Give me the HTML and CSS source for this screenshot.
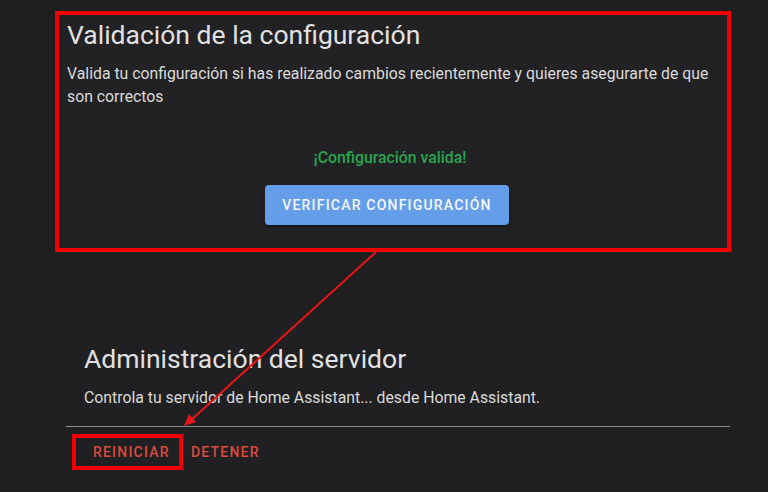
FILE: index.html
```html
<!doctype html>
<html lang="es">
<head>
    <meta charset="UTF-8">
    <meta name="viewport" content="width=device-width, initial-scale=1.0">
    <title>Controles del servidor</title>
    <link rel="stylesheet" href="styles.css">
</head>
<body>
<div class="page">
    <!-- Validation card (highlighted) -->
    <div class="highlight">
        <div class="card-content">
            <h1 class="card-title">Validación de la configuración</h1>
            <p class="card-text">Valida tu configuración si has realizado cambios recientemente y quieres asegurarte de que son correctos</p>
            <div class="result">¡Configuración valida!</div>
            <div class="validate-row">
                <button class="btn-primary">Verificar configuración</button>
            </div>
        </div>
    </div>

    <!-- Server management card -->
    <div class="card">
        <div class="card-body">
            <h1 class="card-title">Administración del servidor</h1>
            <p class="card-text">Controla tu servidor de Home Assistant... desde Home Assistant.</p>
        </div>
        <div class="card-actions">
            <button class="btn-text btn-marked">Reiniciar</button>
            <button class="btn-text">Detener</button>
        </div>
    </div>

    <!-- Annotation arrow -->
    <svg class="arrow" width="768" height="492" viewBox="0 0 768 492">
        <line x1="376" y1="252" x2="190" y2="421" stroke="#e8141a" stroke-width="2"/>
        <polygon points="184,426 189,414 196,422" fill="#e8141a"/>
    </svg>
</div>
</body>
</html>
```

FILE: styles.css
```css
/* Global Styles */
body {
    margin: 0;
    background: #1f1f20;
    font-family: Roboto, 'Noto Sans', sans-serif;
    color: #e1e1e1;
    overflow: hidden;
}

.page {
    position: relative;
    width: 768px;
    height: 492px;
    padding-top: 11px;
    box-sizing: border-box;
}

.card-title {
    margin: 0;
    font-size: 26.5px;
    font-weight: 400;
    line-height: 32px;
    color: #e1e1e1;
}

.card-text {
    margin: 0;
    font-size: 15.8px;
    line-height: 23px;
    color: #dadada;
}

/* Validation card */
.highlight {
    margin-left: 55px;
    width: 676px;
    box-sizing: border-box;
    border: 4px solid #f00000;
    background: #222224;
}

.card-content {
    padding: 4px 14px 23px 8px;
}

.card-content .card-text {
    margin-top: 11px;
}

.result {
    margin-top: 40px;
    text-align: center;
    font-size: 15.8px;
    font-weight: 500;
    line-height: 20px;
    color: #2aa44f;
}

.validate-row {
    display: flex;
    justify-content: center;
    margin-top: 17px;
    padding-right: 6px;
}

.btn-primary {
    width: 244px;
    height: 40px;
    border: none;
    border-radius: 4px;
    background: #659ee8;
    color: #f4f7fc;
    font-family: Roboto, sans-serif;
    font-size: 14px;
    font-weight: 500;
    letter-spacing: 1.2px;
    text-transform: uppercase;
    box-shadow: 0 2px 2px rgba(0, 0, 0, 0.3), 0 1px 5px rgba(0, 0, 0, 0.2);
}

/* Server management card */
.card {
    margin: 68px 0 0 66px;
    width: 664px;
    background: #202022;
}

.card-body {
    padding: 23px 18px 18px 18px;
    border-bottom: 1px solid #8e8e8e;
}

.card-body .card-text {
    margin-top: 13px;
    line-height: 20px;
}

.card-actions {
    display: flex;
    align-items: center;
    gap: 0;
    padding: 7px 0 0 6px;
}

.btn-text {
    height: 36px;
    padding: 0 4px;
    border: 4px solid transparent;
    background: none;
    color: #dc4a3e;
    font-family: Roboto, sans-serif;
    font-size: 14px;
    font-weight: 500;
    letter-spacing: 1.2px;
    text-transform: uppercase;
}

.btn-marked {
    width: 111px;
    padding: 0 11px 0 17px;
    border-color: #f00000;
    text-align: left;
}

/* Annotation */
.arrow {
    position: absolute;
    top: 0;
    left: 0;
    pointer-events: none;
}
```
